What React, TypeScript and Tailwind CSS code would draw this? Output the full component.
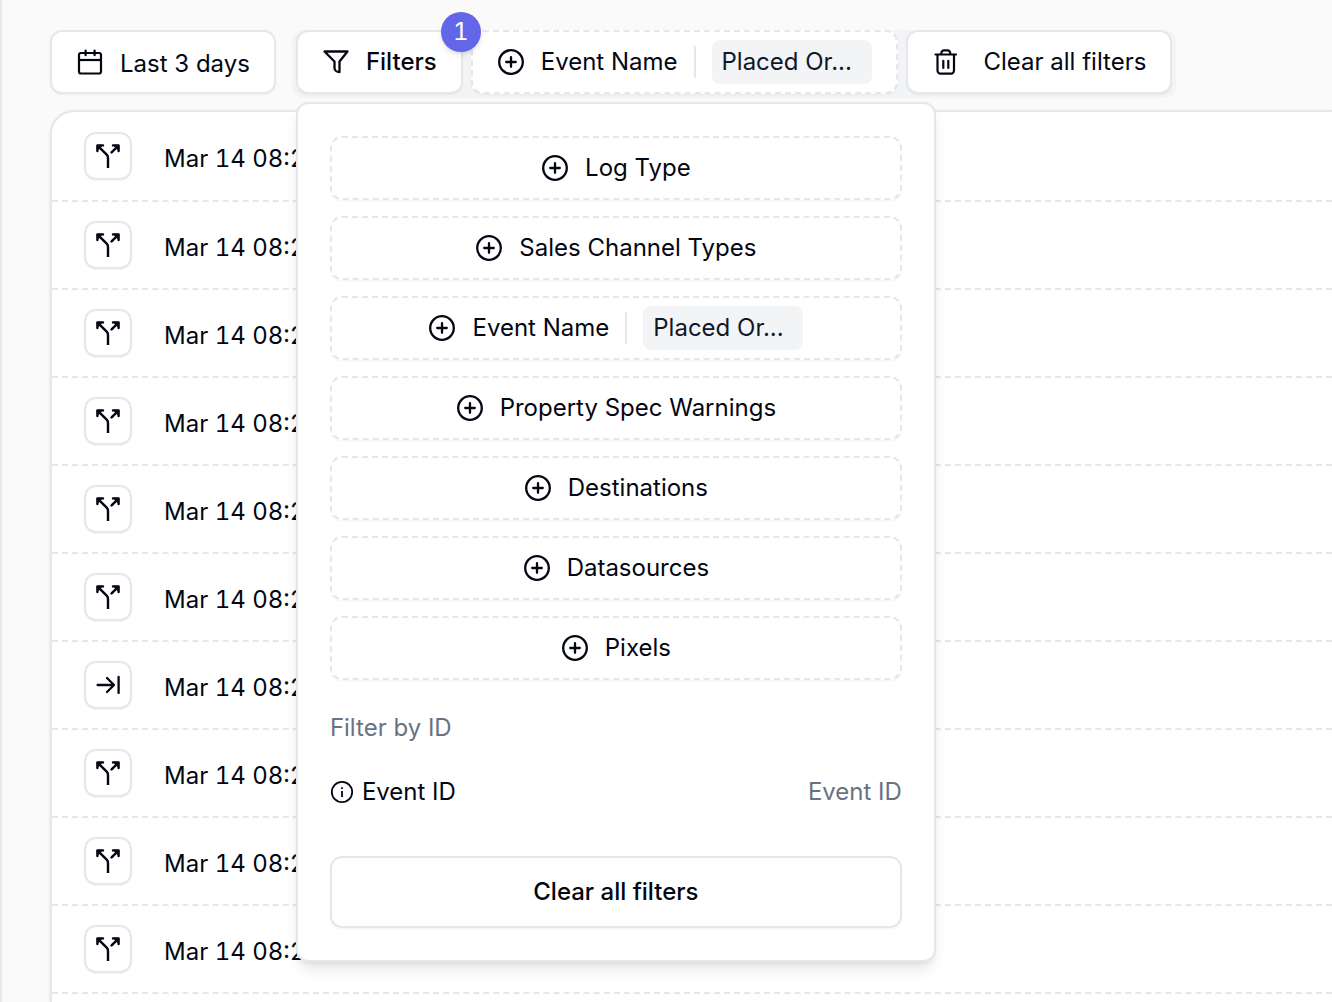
import React from 'react';

interface IconProps {
  className?: string;
}

const CalendarIcon: React.FC<IconProps> = ({ className }) => (
  <svg viewBox="0 0 28 28" fill="none" stroke="currentColor" strokeWidth="2.200" className={className} aria-hidden="true">
    <rect x="3" y="5" width="22" height="20.500" rx="2" />
    <path d="M3 12h22" />
    <path d="M9.600 2.600v4.600M18.600 2.600v4.600" strokeLinecap="round" />
  </svg>
);

const FunnelIcon: React.FC<IconProps> = ({ className }) => (
  <svg viewBox="0 0 28 28" fill="none" stroke="currentColor" strokeWidth="2.300" strokeLinejoin="round" className={className} aria-hidden="true">
    <path d="M2.500 3.500h23L17.500 13.500v10.700c-2.600-.2-5-1.800-5-4.200v-6.500z" />
  </svg>
);

const TrashIcon: React.FC<IconProps> = ({ className }) => (
  <svg viewBox="0 0 28 28" fill="none" stroke="currentColor" strokeWidth="2.200" strokeLinecap="round" className={className} aria-hidden="true">
    <path d="M3.500 6.500h20.500" />
    <path d="M9.300 6V5a2.600 2.600 0 0 1 2.600-2.600h3.600A2.600 2.600 0 0 1 18.200 5v1" />
    <path d="M5.500 7v15.600a3 3 0 0 0 3 3h10.500a3 3 0 0 0 3-3V7" />
    <path d="M11.300 12.800v7.200M16.300 12.800v7.200" />
  </svg>
);

const PlusCircleIcon: React.FC<IconProps> = ({ className }) => (
  <svg viewBox="0 0 28 28" fill="none" stroke="currentColor" strokeWidth="2.300" strokeLinecap="round" className={className} aria-hidden="true">
    <circle cx="14" cy="14" r="11.800" />
    <path d="M14 9.200v9.600M9.200 14h9.600" />
  </svg>
);

const InfoIcon: React.FC<IconProps> = ({ className }) => (
  <svg viewBox="0 0 24 24" fill="none" stroke="currentColor" strokeWidth="1.800" className={className} aria-hidden="true">
    <circle cx="12" cy="12" r="10.200" />
    <path d="M12 11v6M12 7.200v1.800" />
  </svg>
);

const SplitIcon: React.FC<IconProps> = ({ className }) => (
  <svg viewBox="0 0 24 24" fill="none" stroke="currentColor" strokeWidth="2.400" strokeLinecap="round" strokeLinejoin="round" className={className} aria-hidden="true">
    <path d="M12 23.800V14c0-1.300-.4-2.400-1.300-3.300L1.800 1.900M1.400 7V1.400H7M17 1.400h5.600V7M22.200 1.900l-6.600 6.500" />
    <path d="M1.400 6V1.400H6zM22.600 6V1.400H18z" fill="currentColor" strokeWidth="1" />
  </svg>
);

const ArrowToLineIcon: React.FC<IconProps> = ({ className }) => (
  <svg viewBox="0 0 24 24" fill="none" stroke="currentColor" strokeWidth="2.300" strokeLinecap="round" strokeLinejoin="round" className={className} aria-hidden="true">
    <path d="M1.600 12h16.400M11 5l7 7-7 7M22.600 4v16" />
  </svg>
);

interface FilterButtonProps {
  label: string;
  value?: string;
  className?: string;
}

const FilterButton: React.FC<FilterButtonProps> = ({ label, value, className = '' }) => (
  <button
    className={`flex h-16 items-center justify-center rounded-xl border-2 border-dashed border-gray-200 bg-white px-6 shadow-xs ${className}`}
  >
    <PlusCircleIcon className="mr-4 size-7 shrink-0" />
    <span className="whitespace-nowrap">{label}</span>
    {value && (
      <>
        <span className="mx-4 h-8 w-0.5 shrink-0 bg-gray-200" />
        <span className="flex h-11 w-40 shrink-0 items-center rounded-lg bg-gray-100 px-2.5 text-gray-900">{value}</span>
      </>
    )}
  </button>
);

const filters = [
  { label: 'Log Type' },
  { label: 'Sales Channel Types' },
  { label: 'Event Name', value: 'Placed Or...' },
  { label: 'Property Spec Warnings' },
  { label: 'Destinations' },
  { label: 'Datasources' },
  { label: 'Pixels' },
];

const rows = ['split', 'split', 'split', 'split', 'split', 'split', 'line', 'split', 'split', 'split'];

const FilterPanel: React.FC = () => (
  <div className="absolute top-full left-1 z-20 mt-1 w-160 rounded-xl border-2 border-gray-200 bg-white p-8 shadow-lg">
    <div className="flex flex-col gap-4">
      {filters.map((filter) => (
        <FilterButton key={filter.label} label={filter.label} value={filter.value} className="w-full" />
      ))}
    </div>
    <p className="mt-8 text-gray-500">Filter by ID</p>
    <div className="mt-8 flex items-center">
      <label htmlFor="event-id" className="flex items-center gap-2 whitespace-nowrap">
        <InfoIcon className="size-6" />
        Event ID
      </label>
      <input
        id="event-id"
        type="text"
        placeholder="Event ID"
        className="min-w-0 flex-1 text-right outline-none placeholder:text-gray-500"
      />
    </div>
    <button className="mt-12 flex h-18 w-full items-center justify-center rounded-xl border-2 border-gray-200 bg-white font-medium shadow-xs">
      Clear all filters
    </button>
  </div>
);

const App: React.FC = () => {
  return (
    <div className="h-screen overflow-hidden border-l-2 border-gray-200 bg-[#fafafa] pt-7.5 pl-12 font-['Inter',sans-serif] text-2xl text-gray-950">
      <div className="flex items-start gap-4">
        <button className="flex h-16 items-center rounded-xl border-2 border-gray-200 bg-white px-6 shadow-xs">
          <CalendarIcon className="mr-4 size-7" />
          <span className="pt-1 whitespace-nowrap">Last 3 days</span>
        </button>

        <div className="relative flex gap-2 rounded-xl bg-gray-100 px-1 pb-1">
          <div className="relative">
            <button className="flex h-16 items-center rounded-xl border-2 border-gray-200 bg-white px-6 font-medium shadow-xs">
              <FunnelIcon className="mr-4 size-7" />
              Filters
            </button>
            <span className="absolute -top-4.5 -right-4.5 z-10 flex size-10 items-center justify-center rounded-full bg-[#6366e8] text-white tabular-nums shadow-md">
              1
            </span>
          </div>
          <FilterButton label="Event Name" value="Placed Or..." />
          <button className="flex h-16 items-center rounded-xl border-2 border-gray-200 bg-white px-6 shadow-xs">
            <TrashIcon className="mr-6 size-7" />
            <span className="whitespace-nowrap">Clear all filters</span>
          </button>
          <FilterPanel />
        </div>
      </div>

      <ul className="mt-3 h-screen rounded-tl-3xl border-t-2 border-l-2 border-gray-200 bg-white shadow-sm">
        {rows.map((kind, i) => (
          <li key={i} className="flex h-22 items-center border-b-2 border-dashed border-gray-200 pl-8 first:h-22.5">
            <span className="flex size-12 items-center justify-center rounded-xl border-2 border-gray-200 shadow-xs">
              {kind === 'split' ? <SplitIcon className="size-6" /> : <ArrowToLineIcon className="size-6" />}
            </span>
            <span className="ml-8 pt-1.5 whitespace-nowrap tabular-nums">Mar 14 08:24:51</span>
          </li>
        ))}
      </ul>
    </div>
  );
};

export default App;
